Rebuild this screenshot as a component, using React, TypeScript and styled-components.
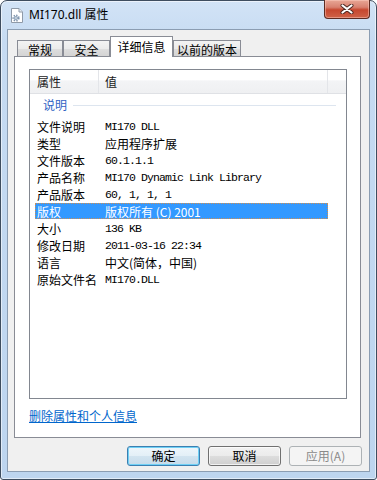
import React from 'react';
import styled, { createGlobalStyle, css } from 'styled-components';

const CJK = '"Noto Sans CJK SC", "Noto Sans", sans-serif';
const MONO = '"Liberation Mono", "Noto Sans CJK SC", monospace';

const GlobalStyle = createGlobalStyle`
  html, body {
    margin: 0;
    padding: 0;
    background: #ffffff;
  }
  body {
    font-family: ${CJK};
    font-size: 12px;
    color: #000000;
  }
`;

const Window = styled.div`
  box-sizing: border-box;
  width: 377px;
  height: 480px;
  display: flex;
  flex-direction: column;
  padding: 0 6px 7px;
  border: 1px solid #3e4d5f;
  border-radius: 7px 7px 3px 3px;
  background: linear-gradient(to bottom, #d2e3f6 0, #c6dbf2 40px, #bdd5ef 100%);
  box-shadow: inset 0 0 0 1px rgba(255, 255, 255, 0.55);
`;

const TitleBar = styled.div`
  height: 28px;
  flex: none;
  display: flex;
  align-items: center;
`;

const TitleIcon = styled.svg`
  margin-left: 4px;
  flex: none;
`;

const TitleText = styled.span`
  margin-left: 6px;
  font-family: "Noto Sans", ${CJK};
  font-size: 12px;
  line-height: 16px;
  color: #000000;
`;

const CloseButton = styled.div`
  box-sizing: border-box;
  margin-left: auto;
  align-self: flex-start;
  margin-top: -1px;
  width: 46px;
  height: 19px;
  display: flex;
  align-items: center;
  justify-content: center;
  border: 1px solid #5d2b22;
  border-top: none;
  border-radius: 0 0 4px 4px;
  background: linear-gradient(to bottom, #e8a796 0%, #d88170 40%, #c6472f 55%, #cf6248 100%);
  box-shadow: inset 0 0 0 1px rgba(255, 210, 200, 0.45);
`;

const Client = styled.div`
  flex: 1;
  display: flex;
  flex-direction: column;
  border: 1px solid #8b9db2;
  background: #f0f0f0;
`;

const TabStrip = styled.div`
  height: 26px;
  flex: none;
  display: flex;
  align-items: flex-end;
  padding-left: 9px;
`;

const Tab = styled.div<{ $w: number; $active?: boolean }>`
  box-sizing: border-box;
  width: ${p => p.$w}px;
  height: 16px;
  display: flex;
  align-items: center;
  justify-content: center;
  padding-top: 2px;
  border: 1px solid #898c95;
  border-bottom: none;
  background: linear-gradient(to bottom, #f3f3f3 0%, #ebebeb 50%, #dedede 51%, #d4d4d4 100%);
  font-size: 12px;
  line-height: 14px;

  ${p =>
    p.$active &&
    css`
      position: relative;
      z-index: 1;
      height: 21px;
      margin-bottom: -1px;
      padding-top: 0;
      background: #ffffff;
    `}
`;

const Panel = styled.div`
  box-sizing: border-box;
  height: 382px;
  flex: none;
  margin: 0 8px 0 6px;
  padding: 12px 13px 0 14px;
  border: 1px solid #898c95;
  background: #ffffff;
`;

const ListView = styled.div`
  box-sizing: border-box;
  width: 318px;
  height: 330px;
  border: 1px solid #828790;
  background: #ffffff;
`;

const Header = styled.div`
  box-sizing: border-box;
  height: 24px;
  display: flex;
  border-bottom: 1px solid #dfe1e5;
  background: linear-gradient(to bottom, #ffffff 0%, #ffffff 45%, #f3f4f6 46%, #eff0f2 100%);
`;

const HeaderCell = styled.div<{ $w?: number; $pad?: number }>`
  box-sizing: border-box;
  ${p => (p.$w ? `width: ${p.$w}px;` : 'flex: 1;')}
  padding-left: ${p => p.$pad ?? 0}px;
  display: flex;
  align-items: center;
  border-right: ${p => (p.$w ? '1px solid #e3e5e9' : 'none')};
  font-size: 12px;
  color: #1a1a1a;
`;

const GroupRow = styled.div`
  height: 17px;
  margin: 2px 0 5px;
  padding-left: 13px;
  display: flex;
  align-items: center;
  font-size: 12px;
  color: #2f63c4;
`;

const GroupLine = styled.div`
  flex: 1;
  height: 1px;
  margin: 1px 10px 0 6px;
  background: #dde5ef;
`;

const Row = styled.div<{ $selected?: boolean }>`
  width: 293px;
  height: 17px;
  margin-left: 5px;
  display: flex;
  align-items: center;
  font-size: 12px;
  line-height: 17px;
  color: #000000;

  ${p =>
    p.$selected &&
    css`
      height: 16px;
      margin-bottom: 1px;
      background: #3399ff;
      color: #ffffff;
      outline: 1px dotted #cf8f52;
      outline-offset: -1px;
    `}
`;

const NameCell = styled.div`
  box-sizing: border-box;
  width: 70px;
  padding-left: 2px;
  white-space: nowrap;
`;

const ValueCell = styled.div<{ $mono?: boolean }>`
  white-space: nowrap;
  ${p =>
    p.$mono &&
    css`
      font-family: ${MONO};
      font-size: 11.5px;
      letter-spacing: -0.9px;
    `}
`;

const RemoveLink = styled.a`
  display: inline-block;
  margin-top: 10px;
  font-size: 12px;
  line-height: 14px;
  color: #0066cc;
  text-decoration: underline;
  cursor: pointer;
`;

const ButtonRow = styled.div`
  display: flex;
  justify-content: flex-end;
  gap: 8px;
  margin-top: 8px;
  padding-right: 7px;
`;

const Button = styled.button<{ $variant: 'default' | 'normal' | 'disabled' }>`
  box-sizing: border-box;
  width: 73px;
  height: 20px;
  padding: 0;
  border-radius: 3px;
  font-family: ${CJK};
  font-size: 12px;
  line-height: 14px;
  color: #000000;
  border: 1px solid #707070;
  background: linear-gradient(to bottom, #f2f2f2 0%, #ebebeb 50%, #dddddd 51%, #cfcfcf 100%);
  box-shadow: inset 0 0 0 1px rgba(255, 255, 255, 0.7);

  ${p =>
    p.$variant === 'default' &&
    css`
      border-color: #3c7fb1;
      background: linear-gradient(to bottom, #eef6fb 0%, #e3eff7 50%, #d2e4f0 51%, #c6dbea 100%);
      box-shadow: inset 0 0 0 1px #6fd0f5;
    `}

  ${p =>
    p.$variant === 'disabled' &&
    css`
      border-color: #adb2b5;
      background: #f4f4f4;
      color: #8a8a8a;
      box-shadow: none;
    `}
`;

const rows = [
  { name: '文件说明', value: 'MI170 DLL', mono: true },
  { name: '类型', value: '应用程序扩展' },
  { name: '文件版本', value: '60.1.1.1', mono: true },
  { name: '产品名称', value: 'MI170 Dynamic Link Library', mono: true },
  { name: '产品版本', value: '60, 1, 1, 1', mono: true },
  { name: '版权', value: '版权所有 (C) 2001', selected: true },
  { name: '大小', value: '136 KB', mono: true },
  { name: '修改日期', value: '2011-03-16 22:34', mono: true },
  { name: '语言', value: '中文(简体，中国)' },
  { name: '原始文件名', value: 'MI170.DLL', mono: true },
];

const tabs = [
  { label: '常规', w: 46 },
  { label: '安全', w: 47 },
  { label: '详细信息', w: 63, active: true },
  { label: '以前的版本', w: 68 },
];

export default function App() {
  return (
    <>
      <GlobalStyle />
      <Window>
        <TitleBar>
          <TitleIcon width="12" height="15" viewBox="0 0 12 15">
            <path d="M0.5 0.5h7.5l3.5 3.5v10.5h-11z" fill="#ffffff" stroke="#8f9aa8" />
            <path d="M8 0.5v3.5h3.5" fill="#e6ecf2" stroke="#8f9aa8" />
            <circle cx="5" cy="10" r="2.8" fill="none" stroke="#7d93ad" strokeWidth="1.6" strokeDasharray="1.4 1.2" />
            <circle cx="5" cy="10" r="2" fill="#8aa0b8" />
            <circle cx="5" cy="10" r="0.8" fill="#ffffff" />
          </TitleIcon>
          <TitleText>MI170.dll 属性</TitleText>
          <CloseButton>
            <svg width="14" height="10" viewBox="0 0 14 10">
              <path d="M2.5 1.5L11.5 8.5M11.5 1.5L2.5 8.5" stroke="#4a2620" strokeWidth="4" strokeLinecap="round" />
              <path d="M2.5 1.5L11.5 8.5M11.5 1.5L2.5 8.5" stroke="#ffffff" strokeWidth="2.2" strokeLinecap="round" />
            </svg>
          </CloseButton>
        </TitleBar>

        <Client>
          <TabStrip>
            {tabs.map(t => (
              <Tab key={t.label} $w={t.w} $active={t.active}>
                {t.label}
              </Tab>
            ))}
          </TabStrip>

          <Panel>
            <ListView>
              <Header>
                <HeaderCell $w={69} $pad={7}>属性</HeaderCell>
                <HeaderCell $w={229} $pad={6}>值</HeaderCell>
                <HeaderCell />
              </Header>
              <GroupRow>
                说明
                <GroupLine />
              </GroupRow>
              {rows.map(r => (
                <Row key={r.name} $selected={r.selected}>
                  <NameCell>{r.name}</NameCell>
                  <ValueCell $mono={r.mono}>{r.value}</ValueCell>
                </Row>
              ))}
            </ListView>
            <RemoveLink>删除属性和个人信息</RemoveLink>
          </Panel>

          <ButtonRow>
            <Button $variant="default">确定</Button>
            <Button $variant="normal">取消</Button>
            <Button $variant="disabled">应用(A)</Button>
          </ButtonRow>
        </Client>
      </Window>
    </>
  );
}
